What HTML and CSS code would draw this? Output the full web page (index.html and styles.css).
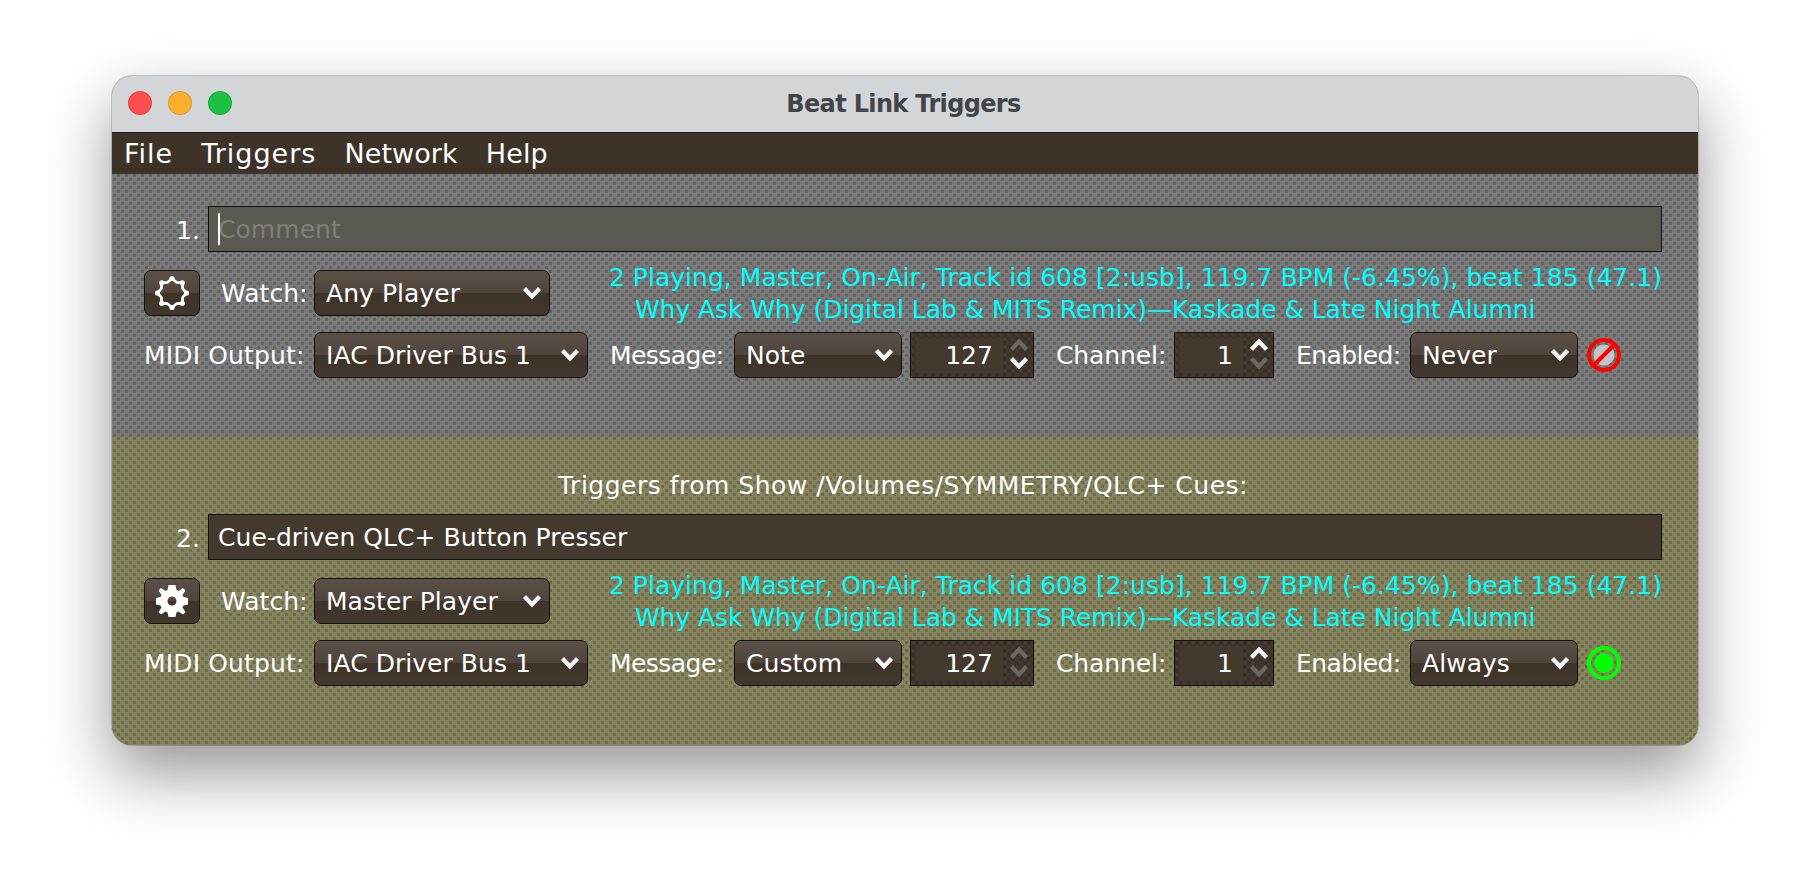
FILE: index.html
```html
<!DOCTYPE html>
<html lang="en">
<head>
<meta charset="utf-8">
<title>Beat Link Triggers</title>
<link rel="stylesheet" href="styles.css">
</head>
<body>
<svg class="defs" width="0" height="0" aria-hidden="true">
  <defs>
    <symbol id="chev" viewBox="0 0 20 14"><path d="M2.500 2.500 10 10.500 17.500 2.500" fill="none" stroke="currentColor" stroke-width="4.200"/></symbol>
    <symbol id="chev-up" viewBox="0 0 20 14"><path d="M2.500 11.500 10 3.500 17.500 11.500" fill="none" stroke="currentColor" stroke-width="4.200"/></symbol>
  </defs>
</svg>
<main class="window">
  <header class="titlebar">
    <div class="lights"><span class="light red"></span><span class="light amber"></span><span class="light green"></span></div>
    <h1 class="title">Beat Link Triggers</h1>
  </header>
  <nav class="menubar"><span class="menu-wide">File</span><span class="menu-wide">Triggers</span><span>Network</span><span>Help</span></nav>

  <section class="trigger trigger-gray">
    <div class="row row-comment">
      <span class="index">1.</span>
      <div class="field field-empty"><span class="caret"></span><span class="placeholder">Comment</span></div>
    </div>
    <div class="row row-watch">
      <button class="gear-btn"><svg class="gear" width="36" height="36" viewBox="-18 -18 36 36"><path d="M0-14.500 4.400-10.700 10.250-10.250 10.700-4.400 14.500 0 10.700 4.400 10.250 10.250 4.400 10.700 0 14.500-4.400 10.700-10.250 10.250-10.700 4.400-14.500 0-10.700-4.400-10.250-10.250-4.400-10.700Z" fill="none" stroke="#fff" stroke-width="2.800" stroke-linejoin="round"/><g fill="#fff"><circle cy="-14.500" r="2.600"/><circle cx="10.250" cy="-10.250" r="2.600"/><circle cx="14.500" r="2.600"/><circle cx="10.250" cy="10.250" r="2.600"/><circle cy="14.500" r="2.600"/><circle cx="-10.250" cy="10.250" r="2.600"/><circle cx="-14.500" r="2.600"/><circle cx="-10.250" cy="-10.250" r="2.600"/></g></svg></button>
      <span class="label label-watch">Watch:</span>
      <div class="combo combo-watch"><span>Any Player</span><svg class="chev"><use href="#chev"/></svg></div>
      <div class="status"><div>2 Playing, Master, On-Air, Track id 608 [2:usb], 119.7 BPM (-6.45%), beat 185 (47.1)</div><div class="status-track">Why Ask Why (Digital Lab &amp; MITS Remix)—Kaskade &amp; Late Night Alumni</div></div>
    </div>
    <div class="row row-midi">
      <span class="label label-midi">MIDI Output:</span>
      <div class="combo combo-midi"><span>IAC Driver Bus 1</span><svg class="chev"><use href="#chev"/></svg></div>
      <span class="label label-message">Message:</span>
      <div class="combo combo-message"><span>Note</span><svg class="chev"><use href="#chev"/></svg></div>
      <div class="spinner spinner-note"><span class="value">127</span><span class="arrows"><svg class="arrow dim"><use href="#chev-up"/></svg><svg class="arrow"><use href="#chev"/></svg></span></div>
      <span class="label label-channel">Channel:</span>
      <div class="spinner spinner-channel"><span class="value">1</span><span class="arrows"><svg class="arrow"><use href="#chev-up"/></svg><svg class="arrow dim"><use href="#chev"/></svg></span></div>
      <span class="label label-enabled">Enabled:</span>
      <div class="combo combo-enabled"><span>Never</span><svg class="chev"><use href="#chev"/></svg></div>
      <svg class="state" width="36" height="36" viewBox="0 0 36 36"><circle cx="18" cy="18" r="10.500" fill="#c4c4c4"/><circle cx="18" cy="18" r="15" fill="none" stroke="#f00" stroke-width="4"/><path d="M7.500 28.500 28.500 7.500" stroke="#f00" stroke-width="4"/></svg>
    </div>
  </section>

  <section class="trigger trigger-olive">
    <p class="show-title">Triggers from Show /Volumes/SYMMETRY/QLC+ Cues:</p>
    <div class="row row-comment">
      <span class="index">2.</span>
      <div class="field"><span>Cue-driven QLC+ Button Presser</span></div>
    </div>
    <div class="row row-watch">
      <button class="gear-btn"><svg class="gear" width="36" height="36" viewBox="-18 -18 36 36"><path fill-rule="evenodd" fill="#fff" d="M-3.500-16H3.500L4.500-11 6.500-10 11-13 13.500-10.500 10.500-6 11.500-4 16-3V3.500L11.500 4.500 10.500 6.500 13.500 11 11 13.500 6.500 10.500 4.500 11.500 3.500 16H-3.500L-4.500 11.500-6.500 10.500-11 13.500-13.500 11-10.500 6.500-11.500 4.500-16 3.500V-3L-11.500-4-10.500-6-13.500-10.500-11-13-6.500-10-4.500-11ZM0-4.500A4.500 4.500 0 1 0 0 4.500 4.500 4.500 0 1 0 0-4.500Z"/></svg></button>
      <span class="label label-watch">Watch:</span>
      <div class="combo combo-watch"><span>Master Player</span><svg class="chev"><use href="#chev"/></svg></div>
      <div class="status"><div>2 Playing, Master, On-Air, Track id 608 [2:usb], 119.7 BPM (-6.45%), beat 185 (47.1)</div><div class="status-track">Why Ask Why (Digital Lab &amp; MITS Remix)—Kaskade &amp; Late Night Alumni</div></div>
    </div>
    <div class="row row-midi">
      <span class="label label-midi">MIDI Output:</span>
      <div class="combo combo-midi"><span>IAC Driver Bus 1</span><svg class="chev"><use href="#chev"/></svg></div>
      <span class="label label-message">Message:</span>
      <div class="combo combo-message"><span>Custom</span><svg class="chev"><use href="#chev"/></svg></div>
      <div class="spinner spinner-note"><span class="value">127</span><span class="arrows"><svg class="arrow dim"><use href="#chev-up"/></svg><svg class="arrow dim"><use href="#chev"/></svg></span></div>
      <span class="label label-channel">Channel:</span>
      <div class="spinner spinner-channel"><span class="value">1</span><span class="arrows"><svg class="arrow"><use href="#chev-up"/></svg><svg class="arrow dim"><use href="#chev"/></svg></span></div>
      <span class="label label-enabled">Enabled:</span>
      <div class="combo combo-enabled"><span>Always</span><svg class="chev"><use href="#chev"/></svg></div>
      <svg class="state" width="36" height="36" viewBox="0 0 36 36"><circle cx="18" cy="18" r="15" fill="none" stroke="#0f0" stroke-width="4"/><circle cx="18" cy="18" r="10" fill="#0f0"/></svg>
    </div>
  </section>
</main>
</body>
</html>
```
FILE: styles.css
```css
* { box-sizing: border-box; }
html, body { margin: 0; height: 100%; }
body {
  background: #fff;
  padding: 76px 0 0 112px;
  overflow: hidden;
  font-family: "DejaVu Sans", sans-serif;
  font-size: 25px;
  color: #fff;
}
.defs { position: absolute; }
.window {
  width: 1586px;
  height: 669px;
  border-radius: 20px;
  overflow: hidden;
  box-shadow: 0 0 0 1px rgba(0,0,0,.18), 0 28px 64px rgba(0,0,0,.42);
  display: flex;
  flex-direction: column;
  background: #7f7e5e;
}
.titlebar {
  flex: none;
  height: 57px;
  background: #d3d6d9;
  border-bottom: 1px solid #1f1b17;
  display: flex;
  align-items: center;
  justify-content: center;
  position: relative;
  padding-right: 3px;
}
.lights { position: absolute; left: 16px; top: 15px; display: flex; gap: 16px; }
.light { width: 24px; height: 24px; border-radius: 50%; border: 1px solid rgba(0,0,0,.12); }
.red { background: #fe4e4e; }
.amber { background: #feaf2f; }
.green { background: #1dc244; }
.title { margin: 0; font: bold 24px "DejaVu Sans", sans-serif; color: #424548; letter-spacing: -.65px; }
.menubar {
  flex: none;
  height: 41px;
  background: #3e3329;
  display: flex;
  align-items: center;
  padding: 0 0 0 12px;
  gap: 28px;
  font-size: 27px;
  letter-spacing: .1px;
}
.menu-wide { letter-spacing: 1px; }
.trigger {
  flex: none;
  display: flex;
  flex-direction: column;
  background-size: 4px 4px, 4px 4px, 8px 8px;
}
.trigger-gray {
  height: 263px;
  padding-top: 32px;
  background-color: #7a7a7a;
  background-image:
    repeating-linear-gradient(90deg, #7a7a7a 0 1px, transparent 1px 4px),
    repeating-linear-gradient(0deg, #7a7a7a 0 1px, transparent 1px 4px),
    conic-gradient(#636363 25%, transparent 0 50%, #636363 0 75%, transparent 0);
}
.trigger-olive {
  height: 308px;
  padding-top: 33px;
  background-color: #85845f;
  background-image:
    repeating-linear-gradient(90deg, #85845f 0 1px, transparent 1px 4px),
    repeating-linear-gradient(0deg, #85845f 0 1px, transparent 1px 4px),
    conic-gradient(#6c6b4e 25%, transparent 0 50%, #6c6b4e 0 75%, transparent 0);
}
.show-title { margin: 0 0 12px; height: 32px; line-height: 32px; text-align: center; letter-spacing: .5px; padding-right: 4px; }
.row { display: flex; align-items: center; letter-spacing: .05px; }
.row-comment { height: 46px; }
.index { width: 96px; padding: 3px 8px 0 0; text-align: right; }
.field {
  width: 1454px;
  height: 46px;
  background: #43392f;
  border: 1px solid #15110e;
  display: flex;
  align-items: center;
  padding-left: 9px;
  position: relative;
}
.field-empty { background: #5c5953; }
.placeholder { color: #807e7a; }
.caret { position: absolute; left: 9px; top: 6px; width: 2px; height: 32px; background: #fff; }
.row-watch { margin-top: 18px; height: 46px; padding-left: 32px; position: relative; }
.row-midi { margin-top: 16px; height: 46px; padding-left: 32px; }
.gear-btn {
  width: 56px;
  height: 46px;
  padding: 0;
  border: 1px solid #15110e;
  border-radius: 7px;
  background: linear-gradient(#5b5149 0, #4e443c 50%, #3e3329 50%, #43382e 100%);
  display: flex;
  align-items: center;
  justify-content: center;
}
.gear { filter: blur(.4px); }
.label { white-space: nowrap; }
.label-watch { margin-left: 21px; width: 85px; margin-right: 8px; text-align: right; }
.label-midi { width: 164px; margin-right: 6px; letter-spacing: .15px; }
.label-message { margin-left: 22px; width: 120px; margin-right: 4px; letter-spacing: -.55px; }
.label-channel { margin-left: 22px; width: 114px; margin-right: 4px; letter-spacing: -.1px; }
.label-enabled { margin-left: 22px; width: 110px; margin-right: 4px; letter-spacing: -.6px; }
.combo {
  height: 46px;
  border: 1px solid #15110e;
  border-radius: 7px;
  background: linear-gradient(#5b5149 0, #4e443c 50%, #3e3329 50%, #43382e 100%);
  display: flex;
  align-items: center;
  justify-content: space-between;
  padding: 0 7px 0 11px;
  flex: none;
}
.chev { width: 20px; height: 14px; color: #f4f4f4; flex: none; }
.combo-watch { width: 236px; }
.combo-midi { width: 274px; }
.combo-message { width: 168px; }
.combo-enabled { width: 168px; }
.spinner {
  height: 46px;
  border: 1px solid #15110e;
  display: flex;
  align-items: center;
  flex: none;
  padding-left: 5px;
  background-color: #433930;
  background-image: conic-gradient(#3a3027 25%, transparent 0 50%, #3a3027 0 75%, transparent 0);
  background-size: 8px 8px;
}
.spinner-note { width: 124px; margin-left: 8px; }
.spinner-channel { width: 100px; }
.value {
  flex: 1;
  height: 35px;
  line-height: 35px;
  text-align: right;
  background: #43392f;
  padding-right: 10px;
  margin-right: 6px;
}
.arrows { display: flex; flex-direction: column; width: 24px; padding-right: 4px; gap: 4px; align-items: center; margin-top: -3px; flex: none; }
.arrow { width: 20px; height: 14px; color: #f4f4f4; }
.arrow.dim { color: #6d6760; }
.status {
  position: absolute;
  right: 36px;
  top: -8px;
  color: #0ff;
  line-height: 32px;
  white-space: nowrap;
  letter-spacing: .03px;
}
.status-track { padding-left: 26px; letter-spacing: -.05px; }
.state { flex: none; margin-left: 8px; }
```
